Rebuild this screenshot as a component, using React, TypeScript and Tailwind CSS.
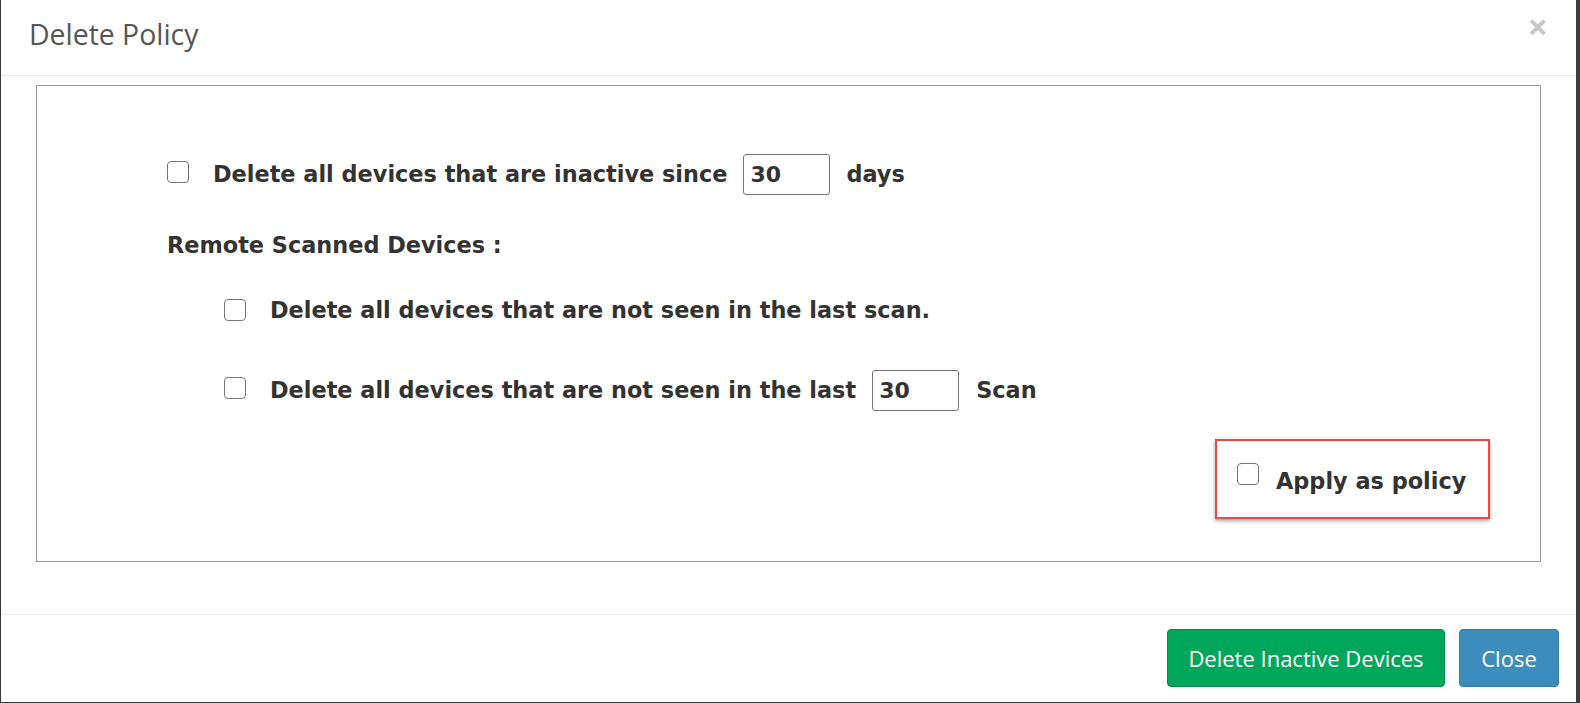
import React from "react";

const Box = ({ className = "" }: { className?: string }) => (
  <span
    className={`inline-block w-[22px] h-[22px] shrink-0 rounded-[4px] border-[1.5px] border-[#767676] bg-white ${className}`}
  />
);

const Num = () => (
  <span className="inline-flex items-center w-[87px] h-[41px] rounded-[3px] border border-[#767676] pl-[6px] text-[22px] font-bold text-[#333]">
    30
  </span>
);

export default function App() {
  const bold = { fontFamily: '"DejaVu Sans", Verdana, sans-serif' };
  const sans = { fontFamily: '"Open Sans", "Noto Sans", sans-serif' };
  return (
    <div className="w-[1580px] h-[703px] bg-[#3b3b3b] overflow-hidden pl-[1px]">
      <div className="w-[1575px] h-[702px] bg-white flex flex-col">
        {/* header */}
        <div className="h-[76px] border-b border-[#e9e9e9] flex items-center justify-between pl-[28px] pr-[28px]" style={sans}>
          <div className="text-[28.4px] text-[#555] -mt-[6px]">Delete Policy</div>
          <div className="text-[36px] font-bold text-[#c8c8c8] leading-none -mt-[22px]">×</div>
        </div>
        {/* body */}
        <div className="pt-[9px] pb-[52px] pl-[35px] pr-[35px]">
          <div className="border border-[#999] pt-[68px] pb-[42px] text-[#333]" style={bold}>
            <div className="flex items-center h-[41px] pl-[130px] text-[22.4px] font-bold">
              <Box className="-mt-[6px]" />
              <span className="ml-[24px]">Delete all devices that are inactive since</span>
              <span className="ml-[16px]"><Num /></span>
              <span className="ml-[16px]">days</span>
            </div>
            <div className="mt-[36px] h-[30px] flex items-center pl-[130px] text-[22.4px] font-bold">
              Remote Scanned Devices :
            </div>
            <div className="mt-[29px] flex items-center h-[41px] pl-[187px] text-[22.4px] font-bold">
              <Box className="-mt-[2px]" />
              <span className="ml-[24px]">Delete all devices that are not seen in the last scan.</span>
            </div>
            <div className="mt-[39px] flex items-center h-[41px] pl-[187px] text-[22.4px] font-bold">
              <Box className="-mt-[5px]" />
              <span className="ml-[24px]">Delete all devices that are not seen in the last</span>
              <span className="ml-[16px]"><Num /></span>
              <span className="ml-[17px]">Scan</span>
            </div>
            <div className="mt-[28px] flex justify-end pr-[50px]">
              <div className="w-[275px] h-[80px] border-2 border-[#f04848] shadow-[0_2px_4px_rgba(0,0,0,0.35)] flex items-start pl-[20px] pt-[22px]">
                <Box />
                <span className="ml-[17px] text-[22.4px] font-bold leading-[30px] mt-[3px]">Apply as policy</span>
              </div>
            </div>
          </div>
        </div>
        {/* footer */}
        <div className="border-t border-[#eeeeee] flex justify-end gap-[14px] pt-[14px] pr-[17px]" style={sans}>
          <button className="w-[278px] h-[58px] rounded-[4px] bg-[#00a65a] border border-[#008d4c] text-white text-[22px]">
            Delete Inactive Devices
          </button>
          <button className="w-[100px] h-[58px] rounded-[4px] bg-[#3c8dbc] border border-[#367fa9] text-white text-[22px]">
            Close
          </button>
        </div>
      </div>
    </div>
  );
}
